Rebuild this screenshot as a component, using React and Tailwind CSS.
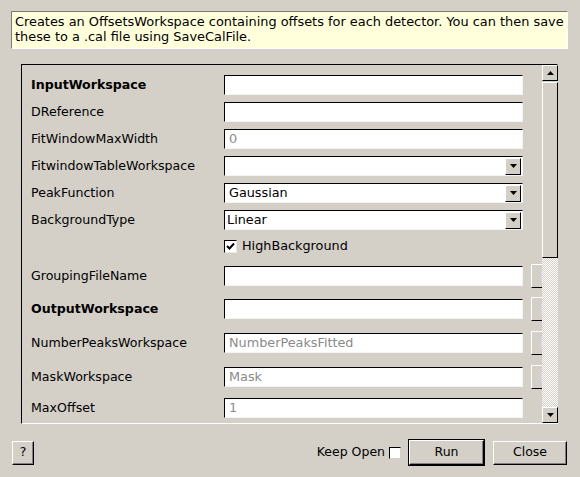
const FONT = { fontFamily: '"DejaVu Sans", Verdana, sans-serif' };

function Sunken({ className = '', children }) {
  return (
    <div
      className={`relative shrink-0 border border-t-black border-l-black border-b-[#f4f4f4] border-r-[#f4f4f4] bg-white ${className}`}
    >
      {children}
    </div>
  );
}

function TextBox({ value, grey }) {
  return (
    <Sunken className="w-[299px] h-[20px] flex items-center pl-[4px]">
      <span className={`text-[12.8px] leading-none ${grey ? 'text-[#8a8a8a]' : 'text-black'}`}>{value}</span>
    </Sunken>
  );
}

function Arrow({ dir = 'down' }) {
  return (
    <svg width="7" height="4" viewBox="0 0 7 4">
      {dir === 'down' ? <path d="M0 0h7L3.5 4z" fill="#000" /> : <path d="M0 4h7L3.5 0z" fill="#000" />}
    </svg>
  );
}

function Combo({ value }) {
  return (
    <Sunken className="w-[299px] h-[20px] flex items-center pl-[2px]">
      <span className="text-[12.8px] leading-none text-black flex-1">{value}</span>
      <div className="w-[16px] h-[17px] mr-[1px] flex items-center justify-center bg-[#d4d0c8] border border-t-white border-l-white border-b-black border-r-black">
        <Arrow />
      </div>
    </Sunken>
  );
}

function BrowseBtn() {
  return (
    <div className="ml-[8px] w-[26px] h-[24px] shrink-0 bg-[#d4d0c8] border border-t-white border-l-white border-b-black border-r-black flex items-center justify-center">
      <div className="w-[6px] h-[10px] bg-[#d8d8f4]" />
    </div>
  );
}

function Row({ label, bold, children, className = '', browse }) {
  return (
    <div className={`flex items-center shrink-0 ${className}`}>
      <div className={`w-[193px] shrink-0 whitespace-nowrap text-[12.6px] ${bold ? 'font-bold' : ''}`}>{label}</div>
      {children}
      {browse && <BrowseBtn />}
    </div>
  );
}

function Button({ children, className = '', isDefault }) {
  return (
    <button
      className={`h-[24px] bg-[#d4d0c8] text-[12.5px] text-black border border-t-white border-l-white border-b-black border-r-black shadow-[inset_-1px_-1px_0_#808080] ${
        isDefault ? 'outline outline-1 outline-black' : ''
      } ${className}`}
    >
      {children}
    </button>
  );
}

export default function App() {
  return (
    <div style={FONT} className="w-[580px] h-[477px] bg-[#d4d0c8] text-black flex flex-col overflow-hidden">
      {/* Beskrivelse */}
      <div className="mt-[11px] ml-[11px] mr-[12px] h-[38px] bg-[#ffffdc] border border-t-[#7a7a7a] border-l-[#7a7a7a] border-b-white border-r-white px-[3px] pt-[2px] text-[12.9px] leading-[15px] whitespace-nowrap">
        Creates an OffsetsWorkspace containing offsets for each detector. You can then save
        <br />
        these to a .cal file using SaveCalFile.
      </div>

      {/* Egenskaber */}
      <div className="mt-[15px] ml-[21px] mr-[22px] h-[360px] border border-t-black border-l-black border-b-white border-r-white flex">
        <div className="w-[520px] shrink-0 overflow-hidden flex flex-col pl-[9px] pt-[10px]">
          <Row label="InputWorkspace" bold className="h-[20px]">
            <TextBox value="" />
          </Row>
          <Row label="DReference" className="h-[20px] mt-[7px]">
            <TextBox value="" />
          </Row>
          <Row label="FitWindowMaxWidth" className="h-[20px] mt-[7px]">
            <TextBox value="0" grey />
          </Row>
          <Row label="FitwindowTableWorkspace" className="h-[20px] mt-[7px]">
            <Combo value="" />
          </Row>
          <Row label="PeakFunction" className="h-[20px] mt-[7px]">
            <Combo value={<span className="pl-[2px]">Gaussian</span>} />
          </Row>
          <Row label="BackgroundType" className="h-[20px] mt-[7px]">
            <Combo value="Linear" />
          </Row>
          <div className="h-[20px] mt-[6px] flex items-center pl-[193px] shrink-0">
            <div className="w-[13px] h-[13px] bg-white border border-t-black border-l-black border-b-[#e8e8e8] border-r-[#e8e8e8] flex items-center justify-center">
              <svg width="9" height="9" viewBox="0 0 9 9">
                <path d="M1 4l2.5 2.5L8 1.5" stroke="#000" strokeWidth="2" fill="none" />
              </svg>
            </div>
            <span className="ml-[5px] text-[12.8px]">HighBackground</span>
          </div>
          <Row label="GroupingFileName" browse className="h-[24px] mt-[8px]">
            <TextBox value="" />
          </Row>
          <Row label="OutputWorkspace" bold browse className="h-[24px] mt-[9px]">
            <TextBox value="" />
          </Row>
          <Row label="NumberPeaksWorkspace" browse className="h-[24px] mt-[10px]">
            <TextBox value="NumberPeaksFitted" grey />
          </Row>
          <Row label="MaskWorkspace" browse className="h-[24px] mt-[10px]">
            <TextBox value="Mask" grey />
          </Row>
          <Row label="MaxOffset" className="h-[20px] mt-[9px]">
            <TextBox value="1" grey />
          </Row>
        </div>

        {/* Scrollbar */}
        <div className="w-[16px] shrink-0 flex flex-col">
          <div className="h-[16px] bg-[#d4d0c8] border border-t-white border-l-white border-b-black border-r-black flex items-center justify-center">
            <Arrow dir="up" />
          </div>
          <div className="h-[176px] mt-[1px] bg-[#d4d0c8] border border-t-white border-l-white border-b-black border-r-black" />
          <div className="flex-1 bg-[repeating-conic-gradient(#d4d0c8_0%_25%,#ffffff_0%_50%)] bg-[length:2px_2px]" />
          <div className="h-[16px] bg-[#d4d0c8] border border-t-white border-l-white border-b-black border-r-black flex items-center justify-center">
            <Arrow />
          </div>
        </div>
      </div>

      {/* Knapper */}
      <div className="mt-[16px] flex items-center pl-[12px] pr-[13px]">
        <Button className="w-[22px]">?</Button>
        <div className="flex-1" />
        <span className="text-[12.5px]">Keep Open</span>
        <div className="ml-[4px] w-[12px] h-[12px] bg-white border border-t-black border-l-black border-b-[#d4d0c8] border-r-[#d4d0c8]" />
        <Button isDefault className="ml-[8px] w-[75px] h-[25px]">Run</Button>
        <Button className="ml-[9px] w-[74px]">Close</Button>
      </div>
    </div>
  );
}
